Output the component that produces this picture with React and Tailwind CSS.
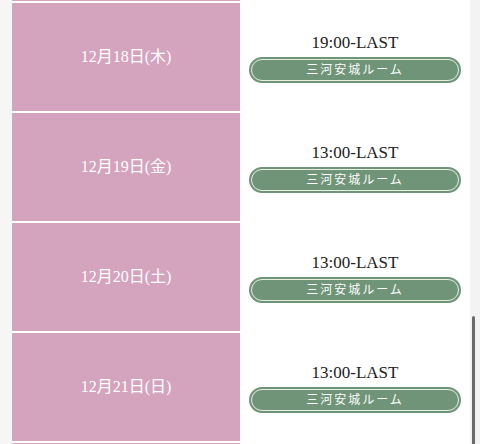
const rows = [
  { date: '12月18日(木)', time: '19:00-LAST' },
  { date: '12月19日(金)', time: '13:00-LAST' },
  { date: '12月20日(土)', time: '13:00-LAST' },
  { date: '12月21日(日)', time: '13:00-LAST' },
];

const serif = { fontFamily: '"Liberation Serif", "Noto Sans CJK JP", serif' };

const Row = ({ date, time }) => (
  <div className="flex h-[110px]">
    <div className="flex w-[228px] items-center justify-center border-t-2 border-white bg-[#d4a3bd]">
      <span className="text-[16px] text-white" style={serif}>{date}</span>
    </div>
    <div className="flex flex-1 flex-col items-center justify-center bg-white px-[9px] pt-[2px]">
      <p className="text-[17px] leading-[22px] text-[#222]" style={serif}>{time}</p>
      <div className="mt-[3px] w-full rounded-full bg-[#6f9478] p-[2px]">
        <div className="flex h-[22px] items-center justify-center rounded-full border border-[#e6eee0]">
          <span className="text-[12px] tracking-[2px] text-white" style={serif}>三河安城ルーム</span>
        </div>
      </div>
    </div>
  </div>
);

export default function App() {
  return (
    <div className="flex h-[444px] w-[480px] overflow-hidden bg-white">
      <div className="w-[12px] bg-[#f7f6f6]" />
      <div className="w-[458px] overflow-hidden">
        <div className="flex h-[1px]">
          <div className="w-[228px] bg-[#d4a3bd]" />
        </div>
        {rows.map((r) => (
          <Row key={r.date} {...r} />
        ))}
        <div className="flex h-[110px]">
          <div className="w-[228px] border-t-2 border-white bg-[#d4a3bd]" />
        </div>
      </div>
      <div className="relative w-[10px] bg-[#f3f3f3]">
        <div className="absolute left-[2px] top-[316px] h-[140px] w-[3px] rounded-full bg-[#6b6b6b]" />
      </div>
    </div>
  );
}
